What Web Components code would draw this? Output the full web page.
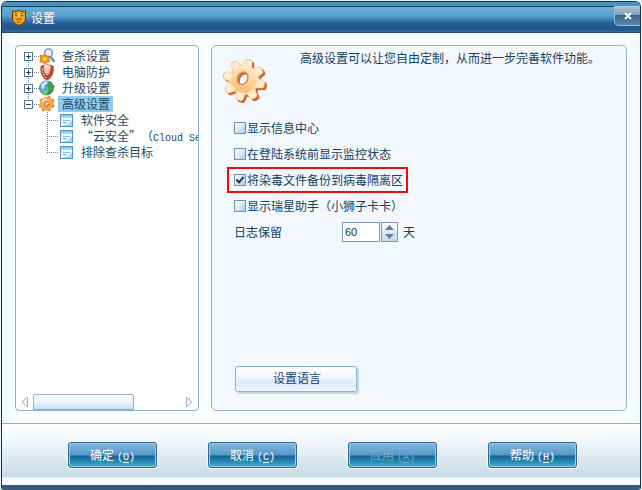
<!DOCTYPE html>
<html lang="zh-CN">
<head>
<meta charset="utf-8">
<title>设置</title>
<style>
  body {
    margin: 0;
    background: #e9f3fa;
    color: #17405c;
    font: 12px/16px "Noto Sans CJK SC", "Liberation Sans", sans-serif;
    text-spacing-trim: space-all;
  }
  .latin { font-family: "Liberation Mono", monospace; font-size: 10px; }
</style>
</head>
<body>

<settings-window heading="设置">
  <tree-panel slot="side">
    <tree-item icon="scan" first>查杀设置</tree-item>
    <tree-item icon="shield">电脑防护</tree-item>
    <tree-item icon="globe">升级设置</tree-item>
    <tree-item icon="gear" open selected>高级设置</tree-item>
    <tree-item icon="page" child>软件安全</tree-item>
    <tree-item icon="page" child>“云安全”（<span class="latin">Cloud Se</span></tree-item>
    <tree-item icon="page" child last>排除查杀目标</tree-item>
  </tree-panel>

  <option-panel>
    <span slot="intro">高级设置可以让您自由定制，从而进一步完善软件功能。</span>
    <option-check>显示信息中心</option-check>
    <option-check>在登陆系统前显示监控状态</option-check>
    <option-check checked marked>将染毒文件备份到病毒隔离区</option-check>
    <option-check>显示瑞星助手（小狮子卡卡）</option-check>
    <day-stepper label="日志保留" unit="天" value="60"></day-stepper>
    <plain-button slot="action">设置语言</plain-button>
  </option-panel>

  <glossy-button slot="buttons" key="O">确定</glossy-button>
  <glossy-button slot="buttons" key="C">取消</glossy-button>
  <glossy-button slot="buttons" key="A" disabled>应用</glossy-button>
  <glossy-button slot="buttons" key="H">帮助</glossy-button>
</settings-window>

<script>
// Small icons, all drawn in a 16x16 box
const ICONS = {
  scan: `
    <path d="M11.5 8.5l3.2 4.5" stroke="#6b8fb5" stroke-width="2.6" stroke-linecap="round"/>
    <circle cx="9.5" cy="5" r="4" fill="#d9efff" stroke="#7896b6" stroke-width="1.5"/>
    <path d="M7.5 5a2.5 2.5 0 0 1 2.5-2.3" stroke="#fff" stroke-width="1.2" fill="none"/>
    <path d="M1 7l3 .5L6 6l2 2 2.5.5-.5 2.5 1 2.5-2.5.5L6 16l-2-1.7L1 14l.5-3z" fill="#f39a1c" stroke="#c96a09" stroke-width=".7"/>
    <circle cx="5.8" cy="10.8" r="1.6" fill="#ffe28a"/>`,
  shield: `
    <path d="M2 2.500l3-1.500v6c0 2 1.200 3.800 3 4.500 2-.7 3.300-2.500 3.300-5V1l3 1.500c.3 6.500-1.300 11-6.300 13.500C3 13.500 1.500 9 2 2.500z" fill="#c2492c" stroke="#9b3520" stroke-width=".8"/>
    <path d="M3.300 4c0 4.500 1 8 4.200 10.500" stroke="#f5ac8a" fill="none"/>
    <path d="M4.500 2.500Q8-1.500 12 2.500L10.800 7.500Q8 12 5.300 7.500z" fill="#f8e6da" stroke="#cf6a4a" stroke-width=".8"/>
    <path d="M7 3v5M9.200 3v5" stroke="#d98c6b" stroke-width=".8"/>`,
  globe: `
    <circle cx="7.500" cy="8" r="7" fill="#5aa9dc" stroke="#3c79a8" stroke-width=".8"/>
    <path d="M2 5c2-3 5-4 7-3.500L7.500 4 5 5.500 5.500 8 3 9z" fill="#d8f1f8"/>
    <path d="M5 9l3 1 1 2-2 3-2.500-2z" fill="#7cc653"/>
    <path d="M8 6l3.500-4.500 4 5.500-1.800.2C14 10.500 12 13.500 8 14.500c2-2.500 2.500-5 2.200-8z" fill="#46a832" stroke="#2a7d24" stroke-width=".6"/>`,
  gear: `
    <path d="M6.500 1l2 .5 1-1.200 2 .7v1.700l1.500 1 1.500-.4.8 2-1.300 1.200v1.800l1.200 1.200-1 1.900-1.800-.2-1.200 1.300.1 1.700-2 .8-1.300-1.300-1.800.1-1.200 1.400-2-1 .1-1.800-1.200-1.300L.9 11.300.3 9.200 1.800 8l.2-1.800L.8 4.800l1.200-1.800 1.800.4L5.300 2.500z" fill="#f5a94a" stroke="#d37a2a" stroke-width=".8"/>
    <path d="M3 6.500c1-2.500 3-3.500 5.500-3" stroke="#ffe0a6" stroke-width="1.500" fill="none"/>
    <path d="M6 10V8c0-2 3.500-2.300 4.200-.3V9L8.500 8.500 7.500 11z" stroke="#b5571e" stroke-width=".9" fill="#fff"/>`,
  page: `
    <rect x="2.500" y="2.500" width="12" height="12" fill="#e8f7ff" stroke="#4f93bd"/>
    <path d="M3 3h11v2.500H3z" fill="#8fcdee"/>
    <path d="M5 8.500h7M5 10.500h4" stroke="#88bfe0"/>
    <path d="M14 8v6H5c4-1 7-3 9-6z" fill="#a9d8f0"/>`
};

class SettingsWindow extends HTMLElement {
  connectedCallback() {
    this.attachShadow({ mode: "open" }).innerHTML = `
      <style>
        :host { display: block; padding: 1px 1px 0; }
        .window {
          display: flex; flex-direction: column; box-sizing: border-box;
          min-height: calc(100vh - 1px);
          border: solid #12324f; border-width: 1px 1px 0;
          border-radius: 6px 6px 3px 3px; overflow: hidden;
          background: #f7fdff;
        }
        header {
          display: flex; align-items: center; height: 30px; padding-left: 10px;
          color: #fff; border-bottom: 1px solid #1c4a70;
          background: linear-gradient(#4a93be 0 4px, #153d60 4px 5px, #65aed6 5px, #5a9fcb 14px, #3a7db2 18px, #265a90 22px, #23568b 27px, #2f6f95);
        }
        h1 { flex: 1; margin: 0 0 0 5px; padding-top: 2px; font: inherit; }
        header svg { margin-top: 2px; }
        .close {
          align-self: flex-start; width: 26px; height: 20px; margin-top: 4px; padding: 0;
          border: 1px solid #8ec1df; border-top: 0; border-right: 0; border-radius: 0 0 0 5px;
          background: linear-gradient(#b0c8d8, #7e9eb8 45%, #376489 50%, #5a88aa);
        }
        .close svg { display: block; margin: 0 auto; }
        main { flex: 1; display: flex; gap: 12px; padding: 12px 13px 12px; background: linear-gradient(90deg, #eef8fd, #f9feff 12px, #f9feff calc(100% - 12px), #eef8fd); }
        ::slotted([slot=side]) { flex: 0 0 182px; }
        ::slotted(:not([slot])) { flex: 1; }
        footer {
          display: flex; justify-content: space-between;
          padding: 18px 63px 17px 66px;
          border-top: 1px solid #8cb0c8;
          border-bottom: 5px solid #3b5779;
          background: linear-gradient(#fff, #f3f8fa 25%, #c7dce6 86%, #f6fcff 89%);
        }
      </style>
      <div class="window">
        <header>
          <svg width="14" height="16" viewBox="0 0 14 16" aria-hidden="true">
            <path d="M.5 1L4 1.500 7 .5l3 1L13.500 1v8c0 3-3 5-6.500 6.500C3.500 14 .5 12 .5 9z" fill="#f0a51b" stroke="#613a0c"/>
            <path d="M3 5l3 1M11 5L8 6M4 9l2 1 1-2 1 2 2-1M5 12h4M3 3l2 .5M11 3l-2 .5" stroke="#8a4c0c" stroke-width=".8" fill="none"/>
            <path d="M6 3.500h2l-.5 4h-1z" fill="#ffe57a"/>
          </svg>
          <h1></h1>
          <button class="close" aria-label="关闭">
            <svg width="10" height="10" viewBox="0 0 10 10"><path d="M2 2l6 6M8 2L2 8" stroke="#fff" stroke-width="2"/></svg>
          </button>
        </header>
        <main><slot name="side"></slot><slot></slot></main>
        <footer><slot name="buttons"></slot></footer>
      </div>`;
    this.shadowRoot.querySelector("h1").textContent = this.getAttribute("heading");
  }
}

class TreePanel extends HTMLElement {
  connectedCallback() {
    this.attachShadow({ mode: "open" }).innerHTML = `
      <style>
        :host {
          display: flex; flex-direction: column; min-width: 0; overflow: hidden;
          background: #fff; border: 1px solid #94b3cb; border-radius: 4px;
        }
        .items { flex: 1; padding: 2px 0 0 8px; overflow: hidden; }
        .scroll { display: flex; align-items: center; padding: 0 5px; gap: 4px; }
        .scroll button { width: 8px; height: 14px; padding: 0; border: 0; background: none; }
        .scroll svg { display: block; }
        .track { flex: 1; }
        .thumb {
          box-sizing: border-box; width: 68%; height: 16px;
          border: 1px solid #8fb1cb; border-radius: 2px 2px 0 0;
          background: linear-gradient(#fbfeff, #e9f5fc 50%, #c4e1f2);
        }
      </style>
      <div class="items" role="tree"><slot></slot></div>
      <div class="scroll">
        <button aria-label="向左"><svg width="8" height="14" viewBox="0 0 8 14"><path d="M6.500 2.500v9h-1L1.500 7l4-4.500z" fill="#f3f9fd" stroke="#94aec4"/></svg></button>
        <div class="track"><div class="thumb"></div></div>
        <button aria-label="向右"><svg width="8" height="14" viewBox="0 0 8 14"><path d="M1.500 2.500v9h1L6.500 7l-4-4.500z" fill="#f3f9fd" stroke="#94aec4"/></svg></button>
      </div>`;
  }
}

class TreeItem extends HTMLElement {
  connectedCallback() {
    const child = this.hasAttribute("child");
    const open = this.hasAttribute("open");
    this.setAttribute("role", "treeitem");
    this.attachShadow({ mode: "open" }).innerHTML = `
      <style>
        :host { display: flex; height: 16px; line-height: 16px; white-space: nowrap; color: #1d4a66; }
        :host([child]) { padding-left: 19px; }
        .branch {
          flex: none; display: flex; align-items: center; width: 15px;
          --dots-y: repeating-linear-gradient(#6d8ba3 0 1px, transparent 1px 2px);
          --dots-x: repeating-linear-gradient(90deg, #6d8ba3 0 1px, transparent 1px 2px);
          background: var(--dots-y) 4px 0 / 1px 16px no-repeat, var(--dots-x) 4px 8px / 11px 1px no-repeat;
        }
        :host([first]) .branch { background-position: 4px 8px, 4px 8px; }
        :host([last]) .branch, :host([open]) .branch { background-size: 1px 8px, 11px 1px; }
        .branch button {
          width: 9px; height: 9px; padding: 0; border: 1px solid #56758f; background: #fff;
        }
        .branch svg { display: block; }
        .icon { flex: none; width: 16px; height: 16px; }
        .text { padding: 0 3px 0 4px; margin-left: 3px; }
        :host([selected]) .text { background: #93c9ef; }
      </style>
      <span class="branch">${child ? "" : `
        <button aria-label="${open ? "折叠" : "展开"}">
          <svg width="7" height="7" viewBox="0 0 7 7"><path d="M1 3.500h5${open ? "" : "M3.500 1v5"}" stroke="#204a68"/></svg>
        </button>`}
      </span>
      <svg class="icon" viewBox="0 0 16 16" fill="none" aria-hidden="true">${ICONS[this.getAttribute("icon")]}</svg>
      <span class="text"><slot></slot></span>`;
  }
}

class OptionPanel extends HTMLElement {
  connectedCallback() {
    // eight teeth round the body, the darker copy gives the thickness
    const teeth = [0, 45, 90, 135, 180, 225, 270, 315]
      .map(a => `<path d="M-5-13l1.500-7.500q3.500-2 7 0L5-13z" transform="rotate(${a + 14})"/>`).join("");
    this.attachShadow({ mode: "open" }).innerHTML = `
      <style>
        :host {
          display: flex; flex-direction: column; min-width: 0;
          border: 1px solid #98b4ca; border-radius: 5px; background: #f2f8fe;
        }
        .intro { display: flex; padding: 4px 10px 0 8px; gap: 30px; }
        .intro svg { flex: none; margin-top: 5px; }
        .options { flex: 1; display: flex; flex-direction: column; align-items: flex-start; padding: 8px 0 0 15px; }
        .action { padding: 0 0 18px 23px; }
      </style>
      <div class="intro">
        <svg width="50" height="52" viewBox="-24 -25 50 52" aria-hidden="true">
          <defs>
            <linearGradient id="face" gradientUnits="userSpaceOnUse" x1="6" y1="-20" x2="-6" y2="20">
              <stop offset="0" stop-color="#fff1dc"/><stop offset=".5" stop-color="#ffd294"/><stop offset="1" stop-color="#fbb063"/>
            </linearGradient>
            <mask id="hole">
              <rect x="-30" y="-30" width="60" height="60" fill="#fff"/>
              <ellipse cx="-2" cy="-1" rx="4.500" ry="6" transform="rotate(25)" fill="#000"/>
            </mask>
            <g id="shape"><circle r="15"/>${teeth}</g>
          </defs>
          <g transform="translate(2 2)" mask="url(#hole)"><use href="#shape" fill="#d0693a"/></g>
          <g mask="url(#hole)">
            <use href="#shape" fill="#f0b070"/>
            <g transform="scale(.96)"><use href="#shape" fill="url(#face)"/></g>
          </g>
          <ellipse cx="-2" cy="-1" rx="5" ry="6.500" transform="rotate(25)" fill="none" stroke="#cf8a52" stroke-width="1.500"/>
        </svg>
        <slot name="intro"></slot>
      </div>
      <div class="options"><slot></slot></div>
      <div class="action"><slot name="action"></slot></div>`;
  }
}

class OptionCheck extends HTMLElement {
  connectedCallback() {
    this.attachShadow({ mode: "open" }).innerHTML = `
      <style>
        :host { display: block; box-sizing: border-box; height: 26px; padding: 3px 3px 3px 5px; border: 2px solid transparent; }
        :host([marked]) { border-color: #f00b0b; }
        label { display: flex; align-items: center; gap: 1px; }
        .box { display: grid; }
        .box > * { grid-area: 1 / 1; }
        input {
          appearance: none; width: 12px; height: 12px; margin: 0; box-sizing: border-box;
          border: 1px solid #7393ad;
          background: linear-gradient(135deg, #fff, #d9e9f8 50%, #a9c9e8);
        }
        svg { pointer-events: none; visibility: hidden; }
        input:checked + svg { visibility: visible; }
      </style>
      <label>
        <span class="box">
          <input type="checkbox" ${this.hasAttribute("checked") ? "checked" : ""}>
          <svg width="12" height="12" viewBox="0 0 12 12"><path d="M2.500 5.500l2.500 3 4.500-5.500" fill="none" stroke="#173d5c" stroke-width="2"/></svg>
        </span>
        <span><slot></slot></span>
      </label>`;
  }
}

class DayStepper extends HTMLElement {
  connectedCallback() {
    this.attachShadow({ mode: "open" }).innerHTML = `
      <style>
        :host { display: flex; align-items: center; height: 26px; padding-left: 7px; }
        label { width: 108px; }
        input {
          appearance: textfield; box-sizing: border-box; width: 38px; height: 20px;
          margin: 0 1px 0 0; padding: 0 2px; border: 1px solid #7f9db9; border-radius: 0;
          color: #17324a; background: #fff; font: 11px "Liberation Sans", sans-serif;
        }
        input::-webkit-inner-spin-button { appearance: none; }
        .spin { display: flex; flex-direction: column; box-sizing: border-box; width: 17px; height: 20px; margin-right: 5px; border: 1px solid #8098b4; background: linear-gradient(#fafdff, #c8d8ea); }
        .spin button { flex: 1; display: flex; align-items: center; justify-content: center; padding: 0; border: 0; background: none; }
      </style>
      <label for="days">${this.getAttribute("label")}</label>
      <input id="days" type="number" value="${this.getAttribute("value")}">
      <span class="spin">
        <button aria-label="增加"><svg width="9" height="5" viewBox="0 0 9 5"><path d="M0 5l4.500-5L9 5z" fill="#647f9e"/></svg></button>
        <button aria-label="减少"><svg width="9" height="5" viewBox="0 0 9 5"><path d="M0 0l4.500 5L9 0z" fill="#647f9e"/></svg></button>
      </span>
      <span>${this.getAttribute("unit")}</span>`;
    const input = this.shadowRoot.querySelector("input");
    const [up, down] = this.shadowRoot.querySelectorAll("button");
    up.addEventListener("click", () => input.stepUp());
    down.addEventListener("click", () => input.stepDown());
  }
}

class PlainButton extends HTMLElement {
  connectedCallback() {
    this.attachShadow({ mode: "open" }).innerHTML = `
      <style>
        :host { display: inline-block; vertical-align: top; }
        button {
          display: block; width: 122px; height: 26px; padding: 0 0 2px 2px; color: #1c3f66; font: inherit;
          border: 1px solid #8fb0cc; border-radius: 3px;
          background: linear-gradient(#fff, #f3f9ff 40%, #dce9f8 60%, #e9f4fd);
          box-shadow: inset 0 0 0 1px #f4faff, 2px 2px 1px #c3d6e6;
        }
      </style>
      <button><slot></slot></button>`;
  }
}

class GlossyButton extends HTMLElement {
  connectedCallback() {
    this.attachShadow({ mode: "open" }).innerHTML = `
      <style>
        :host { display: block; }
        button {
          display: block; width: 89px; height: 26px; padding: 0; color: #fff; font: inherit; line-height: 16px;
          border: 1px solid #2d6691; border-radius: 3px;
          background: linear-gradient(#86b8dd, #5299c8 50%, #1c6193 54%, #217aa8 70%, #36bcd2);
          box-shadow: inset 0 0 0 1px #9dcbe4, 0 0 0 1px #f5fbff;
        }
        button:disabled { color: #76a9cf; }
        .key { margin-left: 3px; font: 10px "Liberation Mono", monospace; }
        u { text-underline-offset: 2px; }
      </style>
      <button ${this.hasAttribute("disabled") ? "disabled" : ""}><slot></slot><span class="key">(<u>${this.getAttribute("key")}</u>)</span></button>`;
  }
}

customElements.define("settings-window", SettingsWindow);
customElements.define("tree-panel", TreePanel);
customElements.define("tree-item", TreeItem);
customElements.define("option-panel", OptionPanel);
customElements.define("option-check", OptionCheck);
customElements.define("day-stepper", DayStepper);
customElements.define("plain-button", PlainButton);
customElements.define("glossy-button", GlossyButton);
</script>
</body>
</html>
